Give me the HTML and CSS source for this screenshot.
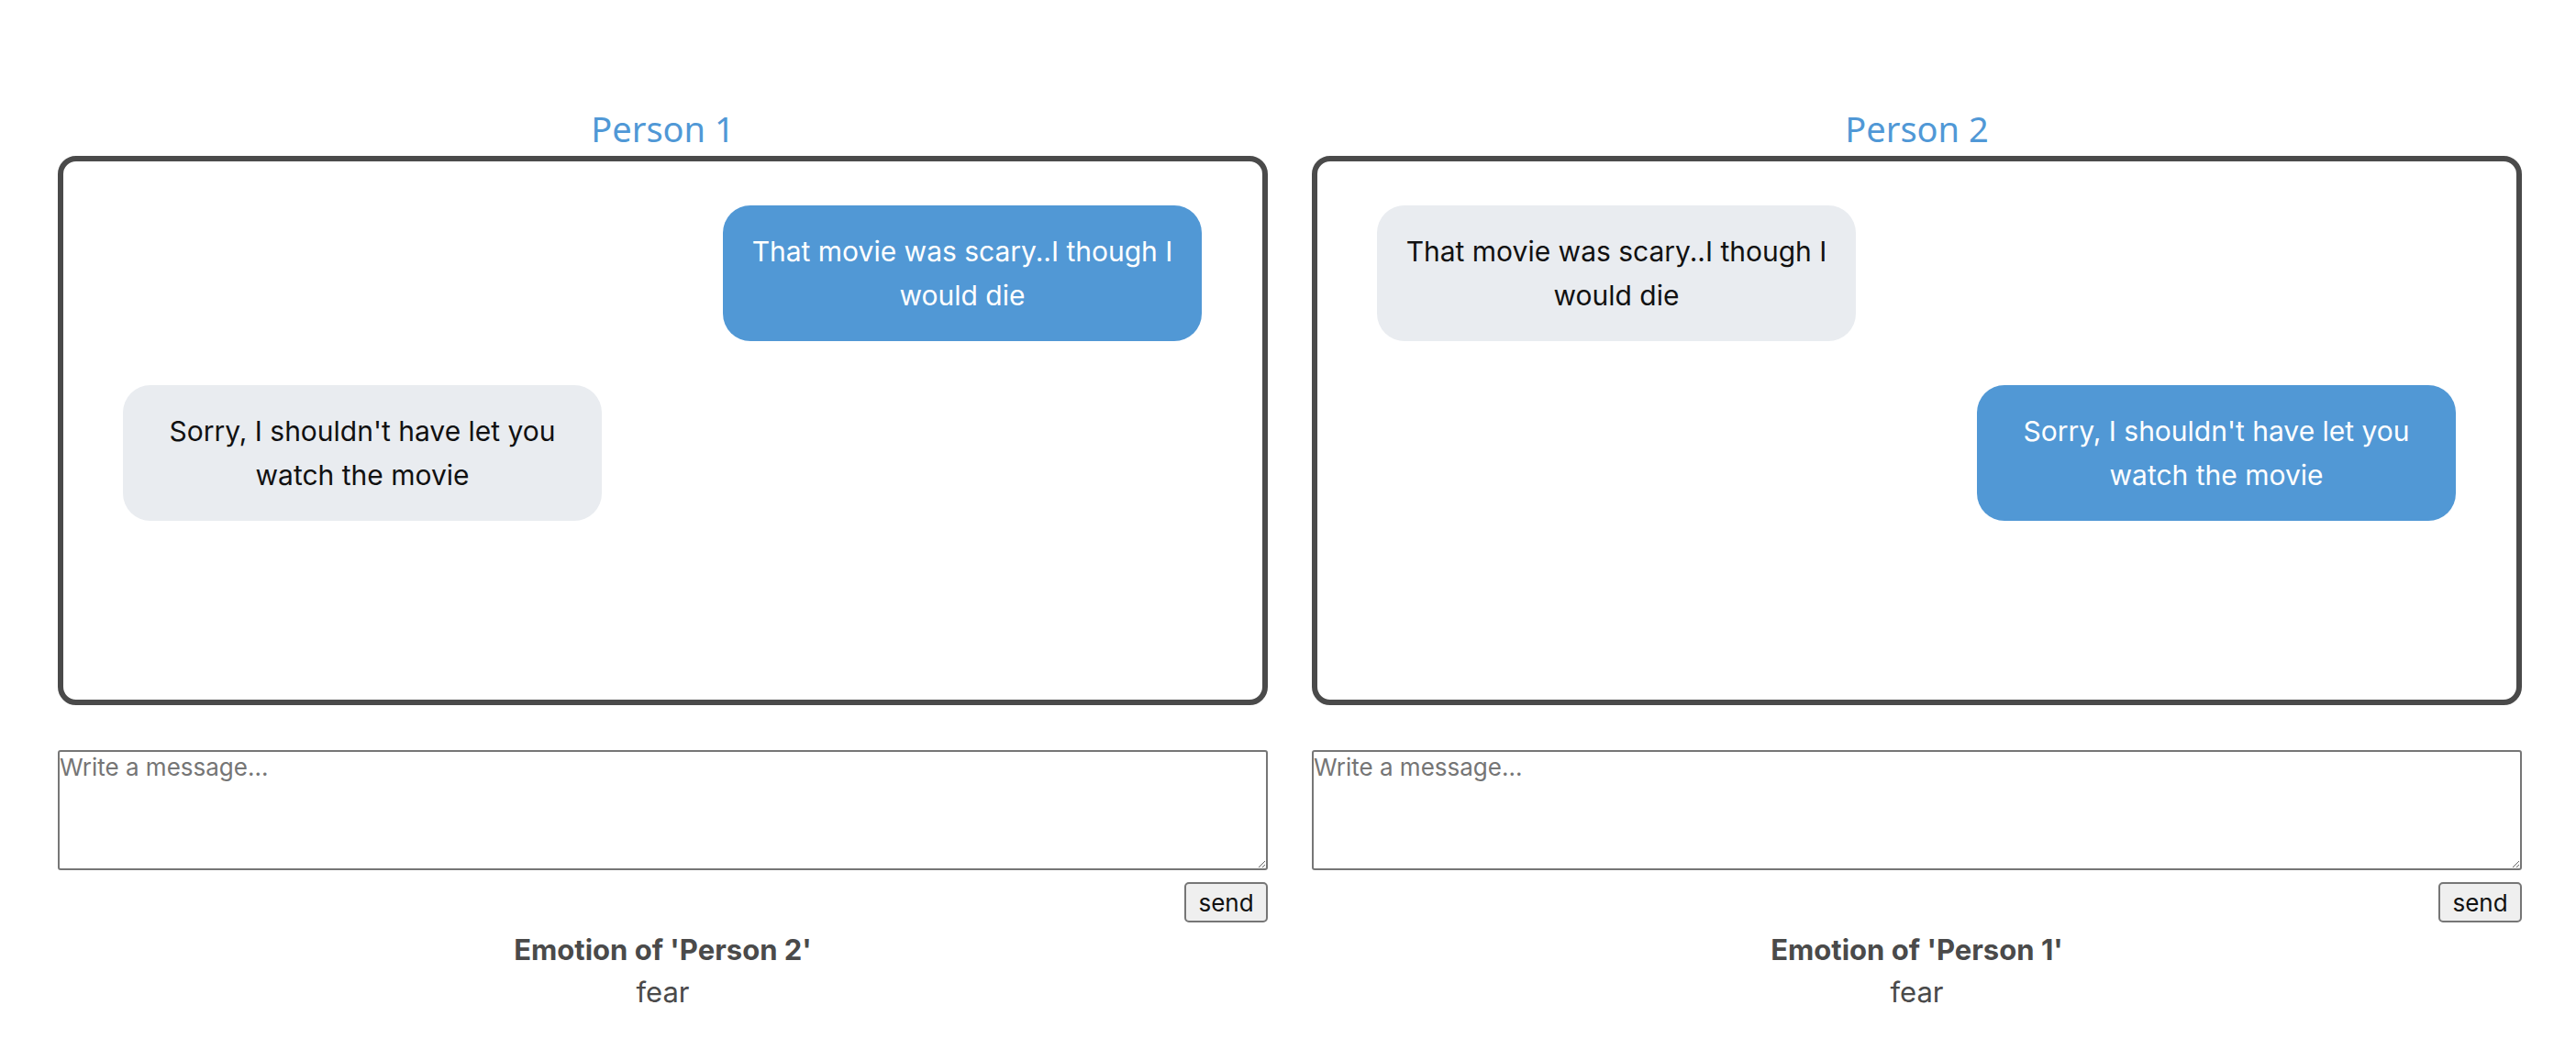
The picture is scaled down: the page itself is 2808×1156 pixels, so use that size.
FILE: index.html
```html
<!DOCTYPE html>
<html lang="en">
<head>
    <meta charset="UTF-8">
    <meta name="viewport" content="width=device-width, initial-scale=1.0">
    <title>Emotion Chat</title>
    <link rel="stylesheet" href="styles.css">
</head>
<body>
    <div class="page">
        <div class="person">
            <h2 class="person-title">Person 1</h2>
            <div class="chat-box">
                <div class="bubble mine">That movie was scary..I though I would die</div>
                <div class="bubble theirs">Sorry, I shouldn't have let you watch the movie</div>
            </div>
            <textarea class="message" placeholder="Write a message..."></textarea>
            <div class="send-row">
                <button class="send-button">send</button>
            </div>
            <div class="emotion">
                <div class="emotion-label">Emotion of 'Person 2'</div>
                <div class="emotion-value">fear</div>
            </div>
        </div>
        <div class="person">
            <h2 class="person-title">Person 2</h2>
            <div class="chat-box">
                <div class="bubble theirs">That movie was scary..I though I would die</div>
                <div class="bubble mine">Sorry, I shouldn't have let you watch the movie</div>
            </div>
            <textarea class="message" placeholder="Write a message..."></textarea>
            <div class="send-row">
                <button class="send-button">send</button>
            </div>
            <div class="emotion">
                <div class="emotion-label">Emotion of 'Person 1'</div>
                <div class="emotion-value">fear</div>
            </div>
        </div>
    </div>
</body>
</html>
```

FILE: styles.css
```css
body {
    margin: 0;
    padding: 0;
    background-color: #fff;
    font-family: Inter, "Noto Sans", sans-serif;
    color: #4a4a4a;
}
.page {
    display: flex;
    gap: 48px;
    padding: 116px 59px 0 63px;
}
.person {
    flex: 1;
    display: flex;
    flex-direction: column;
}
.person-title {
    margin: 0 0 6px;
    text-align: center;
    font-family: "Noto Sans", "Open Sans", sans-serif;
    font-weight: normal;
    font-size: 38px;
    line-height: 48px;
    color: #5098d6;
}
.chat-box {
    box-sizing: border-box;
    height: 599px;
    border: 6px solid #4a4a4a;
    border-radius: 20px;
    padding: 48px 66px 0 65px;
    display: flex;
    flex-direction: column;
    gap: 48px;
}
.bubble {
    box-sizing: border-box;
    max-width: 522px;
    padding: 26px 26px;
    border-radius: 30px;
    font-size: 30px;
    line-height: 48px;
    text-align: center;
}
.mine {
    align-self: flex-end;
    background-color: #5198d5;
    color: #fff;
}
.theirs {
    align-self: flex-start;
    background-color: #e9ecf0;
    color: #111;
}
.message {
    box-sizing: border-box;
    margin-top: 49px;
    width: 100%;
    height: 131px;
    padding: 1px 0;
    border: 2px solid #767676;
    border-radius: 3px;
    font-family: Inter, "Noto Sans", sans-serif;
    font-size: 26px;
    color: #222;
}
.message::placeholder {
    color: #757575;
}
.send-row {
    display: flex;
    justify-content: flex-end;
    margin-top: 13px;
}
.send-button {
    box-sizing: border-box;
    width: 91px;
    height: 44px;
    padding: 0;
    font-family: Inter, "Noto Sans", sans-serif;
    font-size: 26px;
    color: #111;
    background-color: #efefef;
    border: 2px solid #767676;
    border-radius: 5px;
}
.emotion {
    margin-top: 12px;
    text-align: center;
    font-size: 31px;
    line-height: 36px;
}
.emotion-label {
    font-weight: bold;
}
.emotion-value {
    margin-top: 10px;
}
```
